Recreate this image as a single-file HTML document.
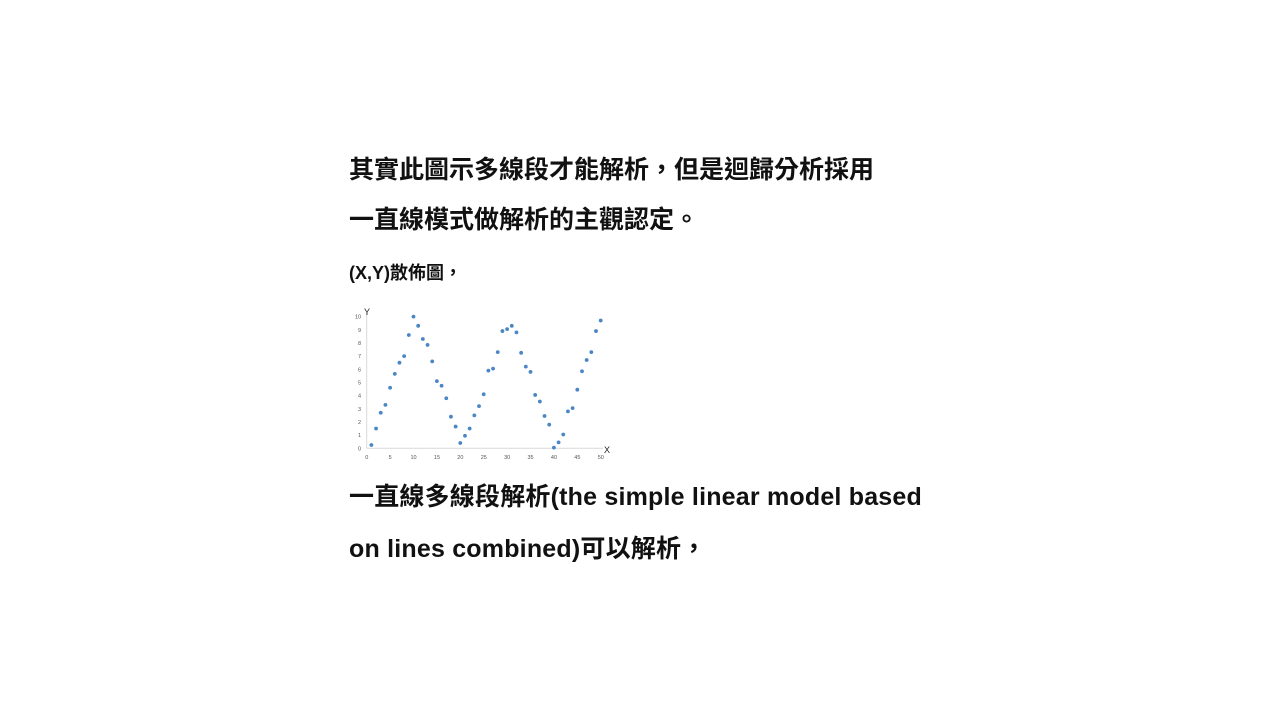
<!DOCTYPE html>
<html><head><meta charset="utf-8"><style>
body{margin:0;width:1280px;height:720px;background:#fff;position:relative;overflow:hidden;font-family:"Liberation Sans","Noto Sans CJK TC",sans-serif;color:#111}
.t{position:absolute;left:349px;white-space:nowrap;font-weight:bold;font-size:25px;line-height:30px}
.s{font-size:18px}
svg{position:absolute;left:345px;top:300px}
</style></head><body>
<div class="t" style="top:155px">其實此圖示多線段才能解析，但是迴歸分析採用</div>
<div class="t" style="top:205px">一直線模式做解析的主觀認定。</div>
<div class="t s" style="top:258px">(X,Y)散佈圖，</div>
<div class="t" style="top:482px;letter-spacing:0.2px">一直線多線段解析(the simple linear model based</div>
<div class="t" style="top:534px;letter-spacing:0.2px">on lines combined)可以解析，</div>
<svg id="c" width="270" height="165" viewBox="0 0 270 165" font-family="Liberation Sans, sans-serif" font-size="5.5" fill="#555">
<line x1="21.7" y1="148.3" x2="258" y2="148.3" stroke="#d9d9d9" stroke-width="1"/>
<line x1="21.7" y1="148.3" x2="21.7" y2="12" stroke="#d9d9d9" stroke-width="1"/>
<text x="19" y="15" font-size="9" fill="#222">Y</text>
<text x="259" y="153" font-size="9" fill="#222">X</text>
</svg>
<script>
var s=document.getElementById('c'),ns='http://www.w3.org/2000/svg';
var ys=[0.25,1.5,2.7,3.3,4.6,5.65,6.5,7,8.6,10,9.3,8.3,7.85,6.6,5.1,4.75,3.8,2.4,1.65,0.4,0.95,1.5,2.5,3.2,4.1,5.9,6.05,7.3,8.9,9.05,9.3,8.8,7.25,6.2,5.8,4.05,3.55,2.45,1.8,0.05,0.45,1.05,2.8,3.05,4.45,5.85,6.7,7.3,8.9,9.7];
ys.forEach(function(y,i){var c=document.createElementNS(ns,'circle');c.setAttribute('cx',21.7+4.68*(i+1));c.setAttribute('cy',148.3-13.17*y);c.setAttribute('r',1.9);c.setAttribute('fill','#4a86c5');s.appendChild(c);});
for(var v=0;v<=10;v++){var t=document.createElementNS(ns,'text');t.setAttribute('x',v==10?10:13);t.setAttribute('y',148.3-13.17*v+2);t.textContent=v;s.appendChild(t);}
for(var x=0;x<=50;x+=5){var t=document.createElementNS(ns,'text');t.setAttribute('x',21.7+4.68*x-(x<10?1.5:3));t.setAttribute('y',159);t.textContent=x;s.appendChild(t);}
</script>
</body></html>
